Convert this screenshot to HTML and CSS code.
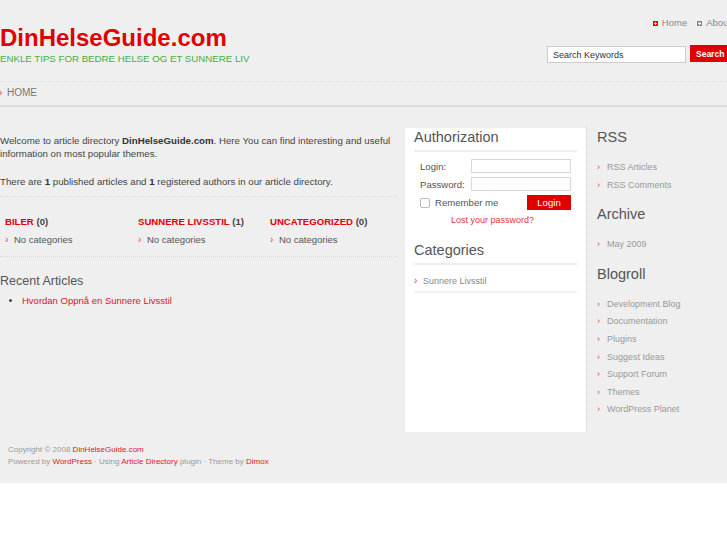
FILE: index.html
```html
<!DOCTYPE html>
<html lang="no">
<head>
<meta charset="utf-8">
<title>DinHelseGuide.com</title>
<link rel="stylesheet" href="styles.css">
</head>
<body>
<div class="wrap">
<div class="page">
  <header class="header">
    <div class="brand">
      <h1 class="logo">DinHelseGuide.com</h1>
      <p class="tagline">ENKLE TIPS FOR BEDRE HELSE OG ET SUNNERE LIV</p>
    </div>
    <div class="tools">
      <ul class="topnav">
        <li class="home"><span class="ico ico-red"></span>Home</li>
        <li><span class="ico ico-gray"></span>About</li>
      </ul>
      <form class="search">
        <input class="search-input" type="text" value="Search Keywords">
        <button class="search-btn" type="button">Search</button>
      </form>
    </div>
  </header>
  <div class="crumbs"><span class="arrow">›</span>HOME</div>

  <main class="main">
    <section class="content">
      <p class="intro">Welcome to article directory <b>DinHelseGuide.com</b>. Here You can find interesting and useful information on most popular themes.</p>
      <p class="intro">There are <b>1</b> published articles and <b>1</b> registered authors in our article directory.</p>
      <div class="cats">
        <div class="cat">
          <div class="cat-title"><a>BILER</a> (0)</div>
          <div class="cat-sub"><span class="arrow">›</span>No categories</div>
        </div>
        <div class="cat">
          <div class="cat-title"><a>SUNNERE LIVSSTIL</a> (1)</div>
          <div class="cat-sub"><span class="arrow">›</span>No categories</div>
        </div>
        <div class="cat">
          <div class="cat-title"><a>UNCATEGORIZED</a> (0)</div>
          <div class="cat-sub"><span class="arrow">›</span>No categories</div>
        </div>
      </div>
      <h2 class="recent-title">Recent Articles</h2>
      <ul class="recent">
        <li><a>Hvordan Oppnå en Sunnere Livsstil</a></li>
      </ul>
    </section>

    <aside class="box">
      <h3 class="box-title">Authorization</h3>
      <form class="login">
        <div class="row"><label>Login:</label><input class="field" type="text"></div>
        <div class="row"><label>Password:</label><input class="field" type="password"></div>
        <div class="row row-remember">
          <span class="check"></span><span class="remember">Remember me</span>
          <button class="login-btn" type="button">Login</button>
        </div>
        <a class="lost">Lost your password?</a>
      </form>
      <h3 class="box-title">Categories</h3>
      <ul class="box-list">
        <li><span class="arrow">›</span>Sunnere Livsstil</li>
      </ul>
    </aside>

    <aside class="side">
      <h3 class="side-title">RSS</h3>
      <ul class="side-list">
        <li><span class="arrow">›</span>RSS Articles</li>
        <li><span class="arrow">›</span>RSS Comments</li>
      </ul>
      <h3 class="side-title">Archive</h3>
      <ul class="side-list">
        <li><span class="arrow">›</span>May 2009</li>
      </ul>
      <h3 class="side-title">Blogroll</h3>
      <ul class="side-list">
        <li><span class="arrow">›</span>Development Blog</li>
        <li><span class="arrow">›</span>Documentation</li>
        <li><span class="arrow">›</span>Plugins</li>
        <li><span class="arrow">›</span>Suggest Ideas</li>
        <li><span class="arrow">›</span>Support Forum</li>
        <li><span class="arrow">›</span>Themes</li>
        <li><span class="arrow">›</span>WordPress Planet</li>
      </ul>
    </aside>
  </main>

  <footer class="footer">
    <div>Copyright © 2008 <a>DinHelseGuide.com</a></div>
    <div>Powered by <a>WordPress</a> · Using <a>Article Directory</a> plugin · Theme by <a>Dimox</a></div>
  </footer>
</div>
</div>
</body>
</html>
```

FILE: styles.css
```css
html, body {
  margin: 0;
  padding: 0;
  background: #fff;
  overflow-x: hidden;
}
body {
  font-family: "Liberation Sans", Arial, sans-serif;
  color: #555;
}
.wrap {
  background: #efefef;
}
.page {
  width: 737px;
}
a { color: #e0141e; text-decoration: none; }
ul { list-style: none; margin: 0; padding: 0; }
h1, h2, h3, p { margin: 0; font-weight: normal; }

/* header */
.header {
  display: flex;
  justify-content: space-between;
  height: 81px;
}
.brand { padding-top: 24px; }
.logo {
  font-size: 24px;
  line-height: 28px;
  font-weight: bold;
  color: #e00000;
}
.tagline {
  font-size: 9.7px;
  line-height: 14px;
  color: #44b044;
}
.tools {
  display: flex;
  flex-direction: column;
  align-items: flex-end;
  padding-top: 16px;
}
.topnav {
  display: flex;
  gap: 10px;
  font-size: 9.5px;
  line-height: 14px;
  color: #888;
  padding-right: 6px;
}
.topnav li { display: flex; align-items: center; }
.ico {
  width: 5px;
  height: 5px;
  margin-right: 4px;
  position: relative;
}
.ico-red { background: #e00000; }
.ico-gray { background: #888; }
.ico::after {
  content: "";
  position: absolute;
  left: 1px; top: 2px;
  width: 3px; height: 1px;
  background: #fff;
}
.ico::before {
  content: "";
  position: absolute;
  left: 2px; top: 1px;
  width: 1px; height: 3px;
  background: #fff;
}
.search {
  display: flex;
  align-items: flex-start;
  gap: 4px;
  margin-top: 15px;
}
.search-input {
  box-sizing: border-box;
  width: 139px;
  height: 17px;
  margin: 1px 0 0;
  border: 1px solid #ccc;
  background: #fff;
  font-family: "Liberation Sans", Arial, sans-serif;
  font-size: 9px;
  color: #333;
  padding: 0 5px;
}
.search-btn {
  height: 17px;
  width: 47px;
  border: 0;
  margin: 0;
  background: #e00000;
  color: #fff;
  font-family: "Liberation Sans", Arial, sans-serif;
  font-weight: bold;
  font-size: 8.5px;
  padding: 0 0 0 6px;
  text-align: left;
}

.crumbs {
  border-top: 1px dotted #dcdcdc;
  border-bottom: 2px solid #dcdcdc;
  font-size: 10px;
  line-height: 14px;
  color: #777;
  padding: 4px 0 5px;
}
.arrow {
  color: #e8434a;
  font-size: 10px;
  display: inline-block;
  width: 9px;
}
.crumbs .arrow { width: 8px; margin-left: -1px; }

/* main */
.main {
  display: flex;
  align-items: flex-start;
  padding-top: 21px;
}
.content {
  width: 398px;
  margin-right: 7px;
  padding-top: 6px;
}
.intro {
  font-size: 9.7px;
  line-height: 13px;
  color: #444;
  margin-bottom: 15px;
}
.intro + .intro { margin-bottom: 0; padding-bottom: 8px; border-bottom: 1px dotted #dcdcdc; }
.intro b { color: #333; }
.cats {
  display: grid;
  grid-template-columns: 133px 132px 133px;
  padding: 18px 0 9px 5px;
  border-bottom: 1px dotted #dcdcdc;
}
.cat-title {
  font-size: 9.6px;
  line-height: 14px;
  color: #444;
  font-weight: bold;
}
.cat-title a { color: #e00000; }
.cat-sub {
  font-size: 9.5px;
  line-height: 14px;
  color: #555;
  margin-top: 4px;
}
.recent-title {
  font-size: 12.5px;
  line-height: 18px;
  margin-top: 15px;
  color: #555;
}
.recent {
  list-style: disc;
  padding-left: 22px;
  margin-top: 4px;
  font-size: 9.5px;
  line-height: 14px;
  color: #444;
}

/* middle box */
.box {
  width: 163px;
  height: 300px;
  background: #fff;
  padding: 1px 9px 3px;
}
.box-title {
  font-size: 14.5px;
  line-height: 17px;
  color: #555;
  padding-bottom: 4px;
  border-bottom: 2px solid #eee;
}
.login {
  padding: 7px 6px 15px 6px;
  display: flex;
  flex-direction: column;
  font-size: 9.6px;
  color: #555;
}
.row {
  display: flex;
  align-items: center;
  height: 14px;
  margin-bottom: 4px;
}
.row label { width: 51px; }
.field {
  box-sizing: border-box;
  width: 100px;
  height: 14px;
  margin: 0;
  border: 1px solid #d8d8d8;
  background: #fff;
}
.row-remember {
  height: 15px;
  margin-top: 0;
}
.check {
  box-sizing: border-box;
  width: 10px;
  height: 10px;
  border: 1px solid #bbb;
  border-radius: 2px;
  margin-right: 5px;
}
.remember { flex: 1; }
.login-btn {
  width: 44px;
  height: 15px;
  border: 0;
  margin: 0;
  background: #e00000;
  color: #fff;
  font-family: "Liberation Sans", Arial, sans-serif;
  font-size: 9.6px;
  padding: 0;
}
.lost {
  align-self: center;
  margin: 0 0 0 -6px;
  font-size: 9px;
  line-height: 13px;
  color: #e8343c;
}
.box-list li {
  font-size: 9px;
  line-height: 13px;
  color: #888;
  padding: 9px 0 3px;
  border-bottom: 2px solid #f2f2f2;
}

/* right sidebar */
.side {
  flex: 1;
  border-left: 1px dotted #d6d6d6;
  padding: 0 0 0 10px;
  margin-top: -1px;
  min-height: 301px;
}
.side-title {
  font-size: 14.5px;
  line-height: 20px;
  color: #555;
}
.side-list {
  margin: 12px 0 10px;
  font-size: 9px;
  color: #999;
}
.side-list li { line-height: 17.6px; }
.side-list .arrow { font-size: 9px; width: 10px; }

/* footer */
.footer {
  padding: 12px 0 15px 8px;
  font-size: 8px;
  line-height: 12px;
  color: #999;
}
.footer a { color: #e0141e; }
```
